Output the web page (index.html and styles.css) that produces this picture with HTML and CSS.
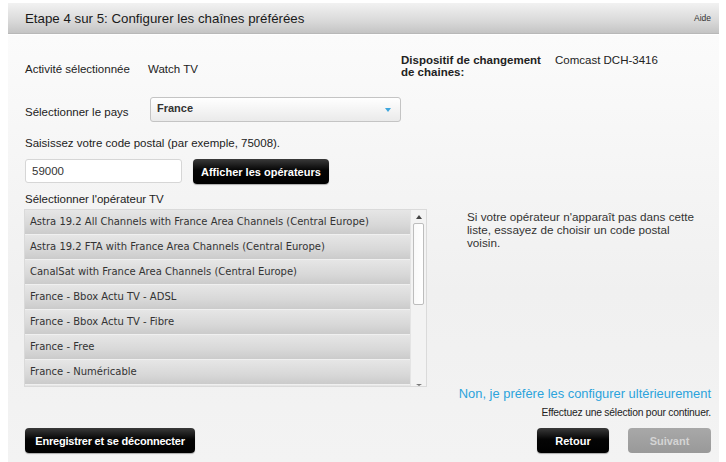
FILE: index.html
```html
<!DOCTYPE html>
<html lang="fr">
<head>
    <meta charset="UTF-8">
    <title>Etape 4 sur 5</title>
    <link rel="stylesheet" href="styles.css">
</head>
<body>

    <div class="wizard">
        <!-- Barre de titre -->
        <div class="titlebar">
            <span class="title">Etape 4 sur 5: Configurer les chaînes préférées</span>
            <span class="help">Aide</span>
        </div>

        <div class="panel">
            <div class="info-row">
                <div class="activity">
                    <span class="label">Activité sélectionnée</span>
                    <span class="value">Watch TV</span>
                </div>
                <div class="device">
                    <span class="device-label">Dispositif de changement de chaines:</span>
                    <span class="value">Comcast DCH-3416</span>
                </div>
            </div>

            <div class="country-row">
                <span class="label">Sélectionner le pays</span>
                <div class="select">
                    <span>France</span>
                    <span class="arrow"></span>
                </div>
            </div>

            <p class="hint">Saisissez votre code postal (par exemple, 75008).</p>

            <div class="postal-row">
                <div class="input">59000</div>
                <button class="btn">Afficher les opérateurs</button>
            </div>

            <p class="hint list-title">Sélectionner l'opérateur TV</p>

            <div class="operators">
                <div class="list">
                    <div class="rows">
                        <div class="row">Astra 19.2 All Channels with France Area Channels (Central Europe)</div>
                        <div class="row">Astra 19.2 FTA with France Area Channels (Central Europe)</div>
                        <div class="row">CanalSat with France Area Channels (Central Europe)</div>
                        <div class="row">France - Bbox Actu TV - ADSL</div>
                        <div class="row">France - Bbox Actu TV - Fibre</div>
                        <div class="row">France - Free</div>
                        <div class="row">France - Numéricable</div>
                        <div class="row">France - Orange</div>
                    </div>
                    <div class="scrollbar">
                        <span class="scroll-up"></span>
                        <span class="thumb"></span>
                        <span class="scroll-down"></span>
                    </div>
                </div>
                <p class="side-note">Si votre opérateur n'apparaît pas dans cette liste, essayez de choisir un code postal voisin.</p>
            </div>

            <div class="later">
                <a href="#">Non, je préfère les configurer ultérieurement</a>
                <span class="notice">Effectuez une sélection pour continuer.</span>
            </div>

            <div class="footer">
                <button class="btn btn-wide">Enregistrer et se déconnecter</button>
                <div class="nav">
                    <button class="btn btn-nav">Retour</button>
                    <button class="btn btn-nav" disabled>Suivant</button>
                </div>
            </div>
        </div>
    </div>

</body>
</html>
```

FILE: styles.css
```css
body {
    margin: 0;
    background-color: #fff;
    font-family: "Liberation Sans", Arial, sans-serif;
    color: #222;
    font-size: 11.5px;
}

.wizard {
    margin: 3px 7px 0 8px;
}

.titlebar {
    height: 30px;
    display: flex;
    justify-content: space-between;
    align-items: center;
    padding: 0 8px 0 17px;
    background: linear-gradient(#f2f2f2, #d9d9d9 60%, #c4c4c4);
    border-bottom: 1px solid #b8b8b8;
}

.title {
    font-size: 13.3px;
    color: #1a1a1a;
}

.help {
    font-size: 8.5px;
    color: #333;
}

.panel {
    margin-top: 1px;
    height: 427px;
    box-sizing: border-box;
    padding: 27px 8px 0 17px;
    background: linear-gradient(#fbfbfb, #f0f0f0 60%, #f3f3f3);
}

.info-row {
    display: flex;
    align-items: flex-start;
}

.activity {
    width: 376px;
    display: flex;
    padding-top: 1px;
}

.activity .label {
    width: 123px;
}

.device {
    display: flex;
    margin-top: -8px;
}

.device-label {
    width: 146px;
    margin-right: 8px;
    font-weight: bold;
    line-height: 12px;
}

.country-row {
    display: flex;
    align-items: center;
    margin-top: 19px;
}

.country-row .label {
    width: 125px;
    padding-top: 5px;
}

.select {
    width: 251px;
    height: 25px;
    box-sizing: border-box;
    display: flex;
    justify-content: space-between;
    align-items: center;
    padding: 0 9px 4px 6px;
    border: 1px solid #c4c4c4;
    border-radius: 3px;
    background: linear-gradient(#ffffff, #eaeaea);
    font-size: 11px;
    font-weight: bold;
    color: #333;
}

.arrow {
    width: 0;
    height: 0;
    margin-top: 4px;
    border-left: 3px solid transparent;
    border-right: 3px solid transparent;
    border-top: 4px solid #3da6dd;
}

.hint {
    margin: 15px 0 0;
}

.postal-row {
    display: flex;
    gap: 11px;
    margin-top: 10px;
}

.input {
    width: 157px;
    height: 24px;
    box-sizing: border-box;
    padding: 5px 6px;
    border: 1px solid #d6d6d6;
    border-radius: 3px;
    background-color: #fff;
    color: #333;
}

.btn {
    height: 25px;
    border: none;
    border-radius: 4px;
    padding: 0 8px;
    background: linear-gradient(#3a3a3a, #050505 45%, #000);
    color: #fff;
    font-family: "Liberation Sans", Arial, sans-serif;
    font-size: 11px;
    font-weight: bold;
    white-space: nowrap;
    box-shadow: 0 1px 1px rgba(0, 0, 0, 0.3);
}

.btn:disabled {
    background: linear-gradient(#a8a8a8, #999);
    color: #d4d4d4;
    box-shadow: none;
}

.list-title {
    margin-top: 9px;
}

.operators {
    display: flex;
    margin-top: 4px;
}

.list {
    width: 403px;
    height: 178px;
    display: flex;
    box-sizing: border-box;
    border: 1px solid #dadada;
    background-color: #f5f5f5;
    margin-left: -1px;
}

.rows {
    flex: 1;
    overflow: hidden;
}

.row {
    height: 24px;
    line-height: 24px;
    padding-left: 5px;
    border-bottom: 1px solid #f0f0f0;
    background: linear-gradient(#e6e6e6, #d8d8d8 60%, #cbcbcb);
    font-family: "DejaVu Sans", Verdana, sans-serif;
    font-size: 10px;
    color: #333;
    white-space: nowrap;
}

.scrollbar {
    width: 15px;
    display: flex;
    flex-direction: column;
    align-items: center;
    background-color: #f3f3f3;
    border-left: 1px solid #e4e4e4;
}

.scroll-up,
.scroll-down {
    width: 0;
    height: 0;
    margin: 5px 0 4px;
    border-left: 3px solid transparent;
    border-right: 3px solid transparent;
}

.scroll-up {
    border-bottom: 4px solid #444;
}

.scroll-down {
    margin-top: auto;
    margin-bottom: 0;
    border-top: 2px solid #777;
}

.thumb {
    width: 11px;
    height: 82px;
    box-sizing: border-box;
    border: 1px solid #bdbdbd;
    border-radius: 2px;
    background: linear-gradient(90deg, #fafafa, #ffffff);
}

.side-note {
    width: 236px;
    margin: 0 0 0 40px;
    padding-top: 1px;
    font-size: 11.7px;
    line-height: 13px;
    color: #333;
}

.later {
    display: flex;
    flex-direction: column;
    align-items: flex-end;
    margin-top: -1px;
}

.later a {
    color: #2ba3dc;
    font-size: 12.9px;
    text-decoration: none;
}

.notice {
    margin-top: 6px;
    font-size: 10.3px;
    letter-spacing: -0.2px;
    color: #222;
}

.footer {
    display: flex;
    justify-content: space-between;
    margin-top: 10px;
}

.btn-wide {
    width: 170px;
    letter-spacing: -0.2px;
}

.nav {
    display: flex;
    gap: 19px;
}

.btn-nav {
    width: 72px;
}

.btn-nav:disabled {
    width: 83px;
}
```
